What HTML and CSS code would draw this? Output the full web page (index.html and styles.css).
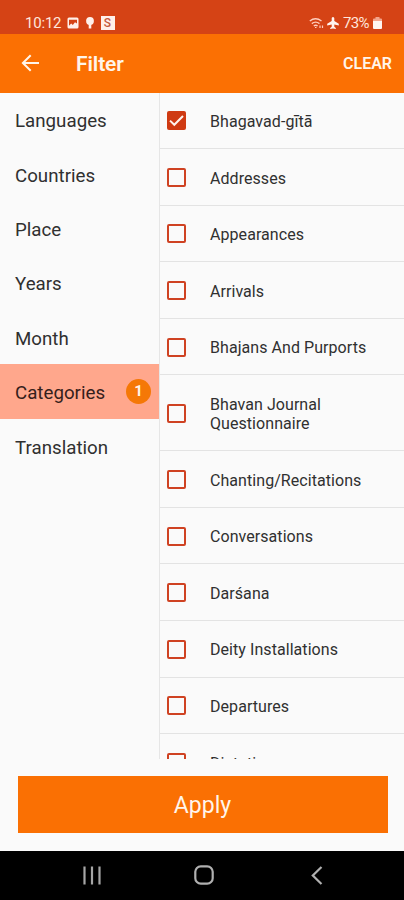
FILE: index.html
```html
<!DOCTYPE html>
<html lang="en">
<head>
<meta charset="utf-8">
<meta name="viewport" content="width=device-width, initial-scale=1">
<title>Filter</title>
<link rel="stylesheet" href="styles.css">
</head>
<body>
<div class="screen">
  <div class="status">
    <span class="clock">10:12</span>
    <svg class="s-img" width="12" height="12" viewBox="0 0 12 12"><rect x=".5" y=".5" width="11" height="11" rx="1.500" fill="#fff0ea"/><path d="M2 2.800h8v3.700L8 5.300 5.800 8 4.200 6.600 2 8.800z" fill="#d54315"/></svg>
    <svg class="s-bulb" width="8" height="12" viewBox="0 0 8 12"><circle cx="4" cy="4" r="3.900" fill="#fff0ea"/><path d="M2.700 7h2.600v4.500H2.700z" fill="#fff0ea"/></svg>
    <span class="s-app">S</span>
    <span class="grow"></span>
    <svg class="s-wifi" width="15" height="13" viewBox="0 0 15 13" fill="none" stroke="#ffcfbf" stroke-width="1.400"><path d="M.8 4Q6.500-.6 12.500 4M2.800 6.600Q6.600 3.600 10.500 6.600M4.800 9Q6.700 7.500 8.600 9"/><path d="M6 10.500h1.500M11 8.500v2.500M13.500 8.500v2.500" stroke-width="1.200"/></svg>
    <svg class="s-plane" width="12" height="12" viewBox="0 0 12 12"><path d="M6 0c.9 0 1.300.8 1.300 1.600v2.500l4.500 2.700v1.700L7.300 7.500v2.300l1.500 1.100v1L6 11.400l-2.800.5v-1l1.500-1.100V7.500L.2 8.500V6.800l4.500-2.700V1.600C4.700.8 5.100 0 6 0z" fill="#fff5f0"/></svg>
    <span class="percent">73%</span>
    <svg class="s-batt" width="9" height="12" viewBox="0 0 9 12"><path d="M2.500 0h4v1.500H8a1 1 0 0 1 1 1V4H0V2.500a1 1 0 0 1 1-1h1.500z" fill="#f3a58c"/><path d="M0 4h9v7a1 1 0 0 1-1 1H1a1 1 0 0 1-1-1z" fill="#fff5f0"/></svg>
  </div>
  <header class="appbar">
    <svg class="back" width="19" height="18" viewBox="0 0 19 18" fill="none" stroke="#fff5eb" stroke-width="2"><path d="M18 9H2M9.700 1.200L1.900 9l7.800 7.800"/></svg>
    <h1 class="title">Filter</h1>
    <span class="clear">CLEAR</span>
  </header>
  <main class="body">
    <nav class="side">
      <div class="tab">Languages</div>
      <div class="tab">Countries</div>
      <div class="tab">Place</div>
      <div class="tab">Years</div>
      <div class="tab">Month</div>
      <div class="tab active">Categories<span class="count">1</span></div>
      <div class="tab">Translation</div>
    </nav>
    <div class="list">
      <div class="row"><span class="box checked"><svg width="19" height="19" viewBox="0 0 19 19" fill="none" stroke="#fff3ee" stroke-width="2"><path d="M3 9.600l4.300 4.200L16 5"/></svg></span><span class="label">Bhagavad-gītā</span></div>
      <div class="row"><span class="box"></span><span class="label">Addresses</span></div>
      <div class="row"><span class="box"></span><span class="label">Appearances</span></div>
      <div class="row"><span class="box"></span><span class="label">Arrivals</span></div>
      <div class="row"><span class="box"></span><span class="label">Bhajans And Purports</span></div>
      <div class="row tall"><span class="box"></span><span class="label">Bhavan Journal<br>Questionnaire</span></div>
      <div class="row"><span class="box"></span><span class="label">Chanting/Recitations</span></div>
      <div class="row"><span class="box"></span><span class="label">Conversations</span></div>
      <div class="row"><span class="box"></span><span class="label">Darśana</span></div>
      <div class="row"><span class="box"></span><span class="label">Deity Installations</span></div>
      <div class="row"><span class="box"></span><span class="label">Departures</span></div>
      <div class="row"><span class="box"></span><span class="label">Dictation</span></div>
    </div>
  </main>
  <footer class="foot"><div class="apply">Apply</div></footer>
  <div class="nav">
    <svg width="18" height="19" viewBox="0 0 18 19" stroke="#a6a6a6" stroke-width="2.200"><path d="M1.500 .5v18M9 .5v18M16.500 .5v18"/></svg>
    <svg width="20" height="20" viewBox="0 0 20 20" fill="none" stroke="#b0b0b0" stroke-width="2.200"><rect x="1.300" y="1.300" width="17.400" height="17.400" rx="5.500"/></svg>
    <svg class="nav-back" width="12" height="19" viewBox="0 0 12 19" fill="none" stroke="#b0b0b0" stroke-width="2.200"><path d="M10.500 1L1.800 9.500l8.700 8.500"/></svg>
  </div>
</div>
</body>
</html>
```
FILE: styles.css
```css
* { box-sizing: border-box; }
body { margin: 0; font-family: Roboto, "Noto Sans", sans-serif; background: #fafafa; }
svg { display: block; flex: none; }
.screen { width: 404px; height: 900px; display: flex; flex-direction: column; overflow: hidden; }
.status { height: 33.5px; flex: none; background: #d54315; color: #ffe6dc; display: flex; align-items: center; padding: 12px 22px 0 25px; }
.clock { font-size: 15px; line-height: 18px; width: 42px; letter-spacing: -.2px; white-space: nowrap; }
.s-bulb { margin-left: 7px; }
.s-app { margin-left: 6.500px; width: 14px; height: 14px; background: #fff0ea; color: #c5593d; font-size: 12px; line-height: 14px; font-weight: 500; text-align: center; }
.grow { flex: 1; }
.s-wifi { margin-top: 1px; }
.s-plane { margin-left: 3px; }
.percent { font-size: 15px; line-height: 18px; width: 30px; margin-left: 4px; letter-spacing: -.7px; white-space: nowrap; }
.appbar { height: 59px; flex: none; background: #fb7003; color: #fff5eb; display: flex; align-items: center; padding: 0 12px 0 21px; }
.title { margin: 0 0 0 36px; font-size: 21px; line-height: 24px; font-weight: 600; flex: 1; letter-spacing: -.1px; padding-top: 2px; }
.clear { font-size: 16px; line-height: 20px; font-weight: 600; letter-spacing: 0; padding-top: 2px; }
.body { height: 666.500px; flex: none; display: flex; overflow: hidden; }
.side { width: 160px; flex: none; border-right: 1.500px solid #e6e6e6; }
.tab { height: 54.400px; display: flex; align-items: center; justify-content: space-between; padding: 3px 8px 0 15px; font-size: 18.700px; color: #303030; letter-spacing: .02px; }
.active { background: #ffa78c; color: #35201b; }
.count { width: 25px; height: 25px; margin-top: -4px; border-radius: 50%; background: #f57806; color: #fff5eb; font-size: 15px; line-height: 25px; font-weight: 700; text-align: center; letter-spacing: 0; }
.list { flex: 1; }
.row { height: 56.600px; display: flex; align-items: center; gap: 24px; padding: 1px 0 0 7px; border-bottom: 1.500px solid #e3e3e3; }
.tall { height: 75.700px; }
.box { width: 19px; height: 19px; flex: none; border: 2px solid #cf4222; border-radius: 2px; }
.checked { border: 0; background: #cf3a12; }
.label { font-size: 16px; line-height: 19px; color: #303030; letter-spacing: .06px; padding-top: 1.500px; }
.foot { height: 91.500px; flex: none; padding: 17px 16.500px 0 17.500px; }
.apply { height: 56.500px; background: #fa7003; color: #fff5eb; font-size: 23px; line-height: 60px; text-align: center; }
.nav { flex: 1; background: #000; display: flex; gap: 93.500px; padding-left: 82.500px; align-items: center; }
.nav-back { margin-left: 3.500px; }
```
